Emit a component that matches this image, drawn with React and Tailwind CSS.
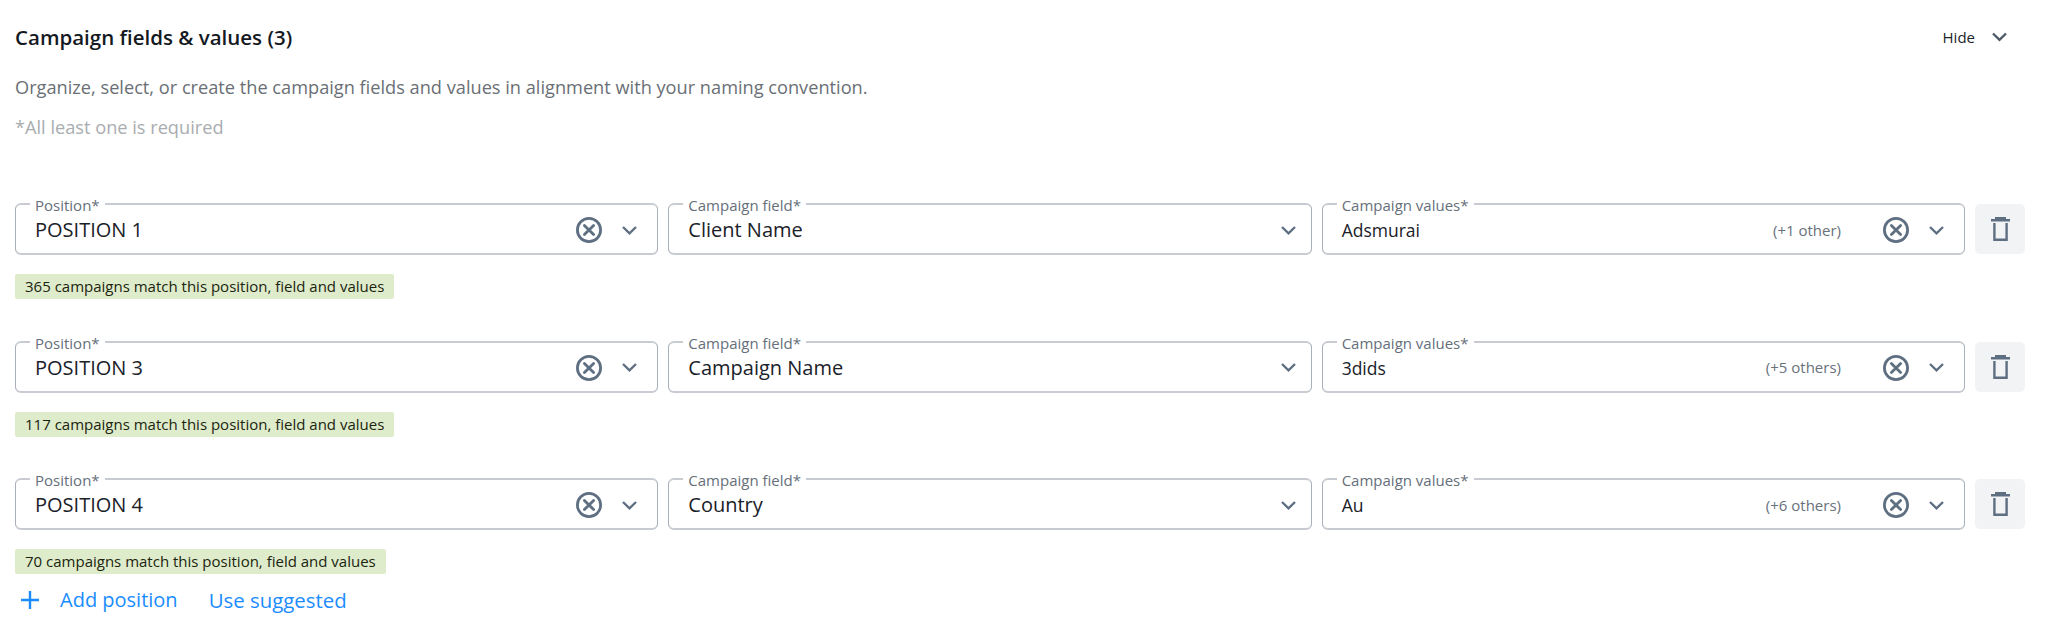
import React from "react";

const ClearIcon = () => (
  <svg width="26" height="26" viewBox="0 0 26 26" fill="none" stroke="#5f6f82" strokeWidth="2.8" className="shrink-0">
    <circle cx="13" cy="13" r="11.6" />
    <path d="M8.4 8.4 17.6 17.6M17.6 8.4 8.4 17.6" strokeLinecap="round" />
  </svg>
);

const Chevron = ({ color = "#5f6f82", w = 15, h = 9 }) => (
  <svg width={w} height={h} viewBox="0 0 15 9" fill="none" stroke={color} strokeWidth="2.4" className="shrink-0">
    <path d="M1 1 7.5 7.3 14 1" />
  </svg>
);

const Trash = () => (
  <svg width="19" height="24" viewBox="0 0 19 24" fill="none" className="shrink-0">
    <path d="M4 0h11v2H4zM0 2h19v2.5H0z" fill="#5f6f82" />
    <path d="M3.4 6v16.8h12.2V6" stroke="#5f6f82" strokeWidth="2.4" />
  </svg>
);

const Field = ({ label, value, note, clear, valueSmall }) => (
  <div className="relative flex h-[52px] min-w-0 flex-1 items-center rounded-[6px] border-x border-y-2 border-x-[#a9b0bb] border-y-[#c8ccd2] bg-white pt-[2px]">
    <span className="absolute left-[14px] top-[-9px] bg-white px-[5px] text-[15px] leading-[18px] text-[#666f7a]">{label}</span>
    <span className={`pl-[19px] text-[#1a2129] ${valueSmall ? "text-[17.5px]" : "text-[20px]"} leading-[26px]`}>{value}</span>
    <div className="ml-auto flex items-center">
      {note && <span className="mr-[42px] text-[15px] text-[#68717c]">{note}</span>}
      {clear && <ClearIcon />}
      <span className={`ml-[20px] flex ${clear ? "mr-[20px]" : "mr-[15px]"}`}><Chevron /></span>
    </div>
  </div>
);

const Row = ({ pos, field, val, note, match }) => (
  <div className="h-[137.5px]">
    <div className="flex items-center">
      <div className="flex min-w-0 flex-1 gap-[10px]">
        <Field label="Position*" value={pos} clear />
        <Field label="Campaign field*" value={field} />
        <Field label="Campaign values*" value={val} note={note} clear valueSmall />
      </div>
      <button className="ml-[10px] flex h-[50px] w-[50px] items-center justify-center rounded-[5px] bg-[#f1f3f5]">
        <Trash />
      </button>
    </div>
    <div className="mt-[19px] inline-block h-[25px] rounded-[2px] bg-[#deeccb] px-[10px] text-[15px] leading-[25px] text-[#1c2410]">
      {match}
    </div>
  </div>
);

export default function App() {
  return (
    <div className="min-h-[635px] bg-white pl-[15px] pr-[22px] pt-[24px] font-['Open_Sans',sans-serif]">
      <div className="flex h-[26px] items-center justify-between">
        <h2 className="text-[20.5px] font-semibold leading-[26px] text-[#14191f]">Campaign fields &amp; values (3)</h2>
        <div className="mr-[18px] flex items-center gap-[17px]">
          <span className="text-[15px] text-[#1d242c]">Hide</span>
          <Chevron color="#4e5a68" w={15} h={10} />
        </div>
      </div>
      <p className="mt-[24px] text-[18.2px] leading-[26px] text-[#6a6f75]">
        Organize, select, or create the campaign fields and values in alignment with your naming convention.
      </p>
      <p className="mt-[14px] text-[18.2px] leading-[26px] text-[#a9adb1]">*All least one is required</p>
      <div className="mt-[63px]">
        <Row pos="POSITION 1" field="Client Name" val="Adsmurai" note="(+1 other)" match="365 campaigns match this position, field and values" />
        <Row pos="POSITION 3" field="Campaign Name" val="3dids" note="(+5 others)" match="117 campaigns match this position, field and values" />
        <div className="h-[108px]">
          <Row pos="POSITION 4" field="Country" val="Au" note="(+6 others)" match="70 campaigns match this position, field and values" />
        </div>
      </div>
      <div className="flex items-center text-[#1a8cff]">
        <svg width="18" height="18" viewBox="0 0 18 18" fill="none" stroke="#1a8cff" strokeWidth="2.4" className="ml-[6px]">
          <path d="M9 0v18M0 9h18" />
        </svg>
        <span className="ml-[21px] text-[20px] leading-[28px]">Add position</span>
        <span className="ml-[31px] text-[20.4px] leading-[28px]">Use suggested</span>
      </div>
    </div>
  );
}
